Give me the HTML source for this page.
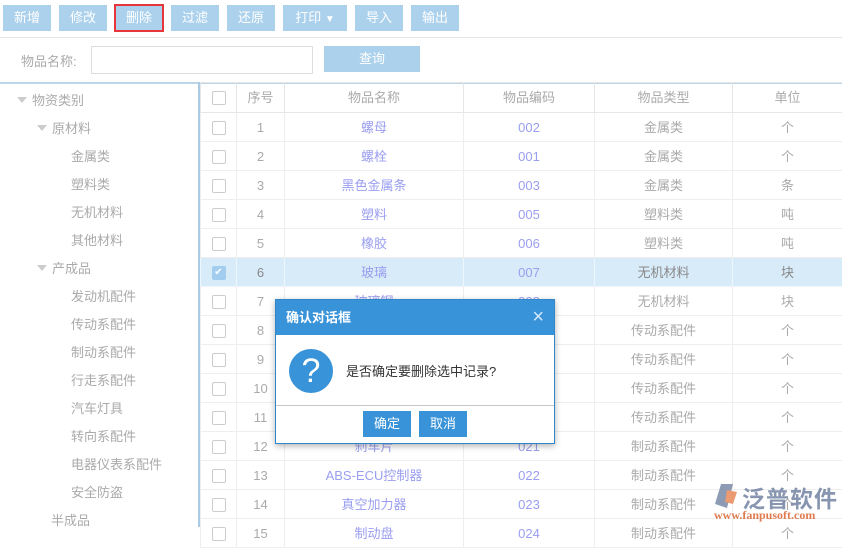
<!DOCTYPE html>
<html><head><meta charset="utf-8"><style>
*{margin:0;padding:0;box-sizing:border-box}
body{width:842px;height:527px;overflow:hidden;background:#fff;font-family:"Liberation Sans","Noto Sans CJK SC",sans-serif;font-size:13px;position:relative;color:#999}
.tb{position:absolute;top:5px;height:26px;background:#acd1ec;color:#fff;text-align:center;line-height:26px;font-size:13px}
.abs{position:absolute}
.tree div{position:absolute;font-size:13px;color:#aaa;white-space:nowrap}
.tri{display:inline-block;width:0;height:0;border-left:5px solid transparent;border-right:5px solid transparent;border-top:6px solid #ccc;margin-right:5px;vertical-align:2px}
table{position:absolute;left:200px;top:82px;border-collapse:collapse;width:642px;table-layout:fixed}
td{height:29px;border:1px solid #eee;text-align:center;font-size:13px;color:#aaa;white-space:nowrap;overflow:hidden;padding:0;line-height:27px}
th{height:30px;border:1px solid #e6e6e6;font-weight:normal;color:#aaa;font-size:13px;line-height:28px}
.nm{color:#9a9ef0}
.cb{display:inline-block;width:14px;height:14px;border:1px solid #ccc;border-radius:2px;vertical-align:middle;background:#fff}
tr.sel td{background:#d8ebf9;color:#888;border-color:#eef5fb}
tr.sel td.nm{color:#9a9ef0}
.cbk{background:#a3cdef;border-color:#a3cdef;color:#fff;font-size:10px;line-height:12px}
</style></head><body>
<div class="tb" style="left:3px;width:48px">新增</div>
<div class="tb" style="left:59px;width:48px">修改</div>
<div class="tb" style="left:115px;width:48px;outline:2px solid #e8353a;outline-offset:-1px;top:5px">删除</div>
<div class="tb" style="left:171px;width:48px">过滤</div>
<div class="tb" style="left:227px;width:48px">还原</div>
<div class="tb" style="left:283px;width:64px">打印 <span style="font-size:10px">▼</span></div>
<div class="tb" style="left:355px;width:48px">导入</div>
<div class="tb" style="left:411px;width:48px">输出</div>
<div class="abs" style="left:0;top:37px;width:842px;height:1px;background:#e5e5e5"></div>
<div class="abs" style="left:21px;top:51px;color:#aaa">物品名称:</div>
<div class="abs" style="left:91px;top:46px;width:222px;height:28px;border:1px solid #ddd"></div>
<div class="abs" style="left:324px;top:46px;width:96px;height:26px;background:#acd1ec;color:#fff;text-align:center;line-height:26px">查询</div>
<div class="abs" style="left:0;top:82px;width:842px;height:2px;background:#bcd5e8"></div>
<div class="abs" style="left:198px;top:82px;width:2px;height:445px;background:#a9cbe6"></div>
<div class="tree">
<div style="left:17px;top:90px"><span class="tri"></span>物资类别</div>
<div style="left:37px;top:118px"><span class="tri"></span>原材料</div>
<div style="left:71px;top:146px">金属类</div>
<div style="left:71px;top:174px">塑料类</div>
<div style="left:71px;top:202px">无机材料</div>
<div style="left:71px;top:230px">其他材料</div>
<div style="left:37px;top:258px"><span class="tri"></span>产成品</div>
<div style="left:71px;top:286px">发动机配件</div>
<div style="left:71px;top:314px">传动系配件</div>
<div style="left:71px;top:342px">制动系配件</div>
<div style="left:71px;top:370px">行走系配件</div>
<div style="left:71px;top:398px">汽车灯具</div>
<div style="left:71px;top:426px">转向系配件</div>
<div style="left:71px;top:454px">电器仪表系配件</div>
<div style="left:71px;top:482px">安全防盗</div>
<div style="left:51px;top:510px">半成品</div>
</div>
<table>
<colgroup><col style="width:36px"><col style="width:48px"><col style="width:179px"><col style="width:131px"><col style="width:138px"><col style="width:110px"></colgroup>
<tr><th><span class="cb"></span></th><th>序号</th><th>物品名称</th><th>物品编码</th><th>物品类型</th><th>单位</th></tr>
<tr><td><span class="cb"></span></td><td>1</td><td class="nm">螺母</td><td class="nm">002</td><td>金属类</td><td>个</td></tr>
<tr><td><span class="cb"></span></td><td>2</td><td class="nm">螺栓</td><td class="nm">001</td><td>金属类</td><td>个</td></tr>
<tr><td><span class="cb"></span></td><td>3</td><td class="nm">黑色金属条</td><td class="nm">003</td><td>金属类</td><td>条</td></tr>
<tr><td><span class="cb"></span></td><td>4</td><td class="nm">塑料</td><td class="nm">005</td><td>塑料类</td><td>吨</td></tr>
<tr><td><span class="cb"></span></td><td>5</td><td class="nm">橡胶</td><td class="nm">006</td><td>塑料类</td><td>吨</td></tr>
<tr class="sel"><td><span class="cb cbk">✔</span></td><td>6</td><td class="nm">玻璃</td><td class="nm">007</td><td>无机材料</td><td>块</td></tr>
<tr><td><span class="cb"></span></td><td>7</td><td class="nm">玻璃钢</td><td class="nm">008</td><td>无机材料</td><td>块</td></tr>
<tr><td><span class="cb"></span></td><td>8</td><td class="nm">离合器</td><td class="nm">017</td><td>传动系配件</td><td>个</td></tr>
<tr><td><span class="cb"></span></td><td>9</td><td class="nm">变速器</td><td class="nm">018</td><td>传动系配件</td><td>个</td></tr>
<tr><td><span class="cb"></span></td><td>10</td><td class="nm">传动轴</td><td class="nm">019</td><td>传动系配件</td><td>个</td></tr>
<tr><td><span class="cb"></span></td><td>11</td><td class="nm">差速器</td><td class="nm">020</td><td>传动系配件</td><td>个</td></tr>
<tr><td><span class="cb"></span></td><td>12</td><td class="nm">刹车片</td><td class="nm">021</td><td>制动系配件</td><td>个</td></tr>
<tr><td><span class="cb"></span></td><td>13</td><td class="nm">ABS-ECU控制器</td><td class="nm">022</td><td>制动系配件</td><td>个</td></tr>
<tr><td><span class="cb"></span></td><td>14</td><td class="nm">真空加力器</td><td class="nm">023</td><td>制动系配件</td><td>个</td></tr>
<tr><td><span class="cb"></span></td><td>15</td><td class="nm">制动盘</td><td class="nm">024</td><td>制动系配件</td><td>个</td></tr>
</table>
<div class="abs" style="left:275px;top:299px;width:280px;height:145px;background:#fff;border:1px solid #2f86cb;box-shadow:0 2px 6px rgba(0,0,0,.3)">
<div style="height:35px;background:#3893d8;color:#fff;font-weight:bold;font-size:13px;line-height:35px;padding-left:10px">确认对话框<span style="position:absolute;right:10px;top:0;font-weight:normal;font-size:20px;color:#d6e9f8">×</span></div>
<div style="position:absolute;left:13px;top:49px;width:44px;height:44px;border-radius:50%;background:#3893d8;color:#fff;text-align:center;font-size:34px;line-height:44px;font-family:'Liberation Sans',sans-serif">?</div>
<div style="position:absolute;left:70px;top:61px;color:#333;font-size:13px">是否确定要删除选中记录?</div>
<div style="position:absolute;left:0;top:105px;width:100%;height:1px;background:#c8c8c8"></div>
<div style="position:absolute;left:87px;top:111px;width:48px;height:26px;background:#3893d8;color:#fff;text-align:center;line-height:26px">确定</div>
<div style="position:absolute;left:143px;top:111px;width:48px;height:26px;background:#3893d8;color:#fff;text-align:center;line-height:26px">取消</div>
</div>
<div class="abs" style="left:713px;top:482px;width:28px;height:28px;opacity:.85">
<svg width="28" height="28" viewBox="0 0 28 28"><path d="M8 2 L20 2 L14 26 L2 22 Z" fill="#7b8aa8"/><path d="M14 8 L24 10 L20 22 L12 20 Z" fill="#e8895a"/></svg></div>
<div class="abs" style="left:742px;top:480px;font-size:23px;color:#7b8aa8;font-weight:bold;letter-spacing:1px;opacity:.9">泛普软件</div>
<div class="abs" style="left:714px;top:508px;font-size:12px;color:#e07b4f;font-family:'Liberation Serif',serif;font-weight:bold">www.fanpusoft.com</div>
</body></html>
